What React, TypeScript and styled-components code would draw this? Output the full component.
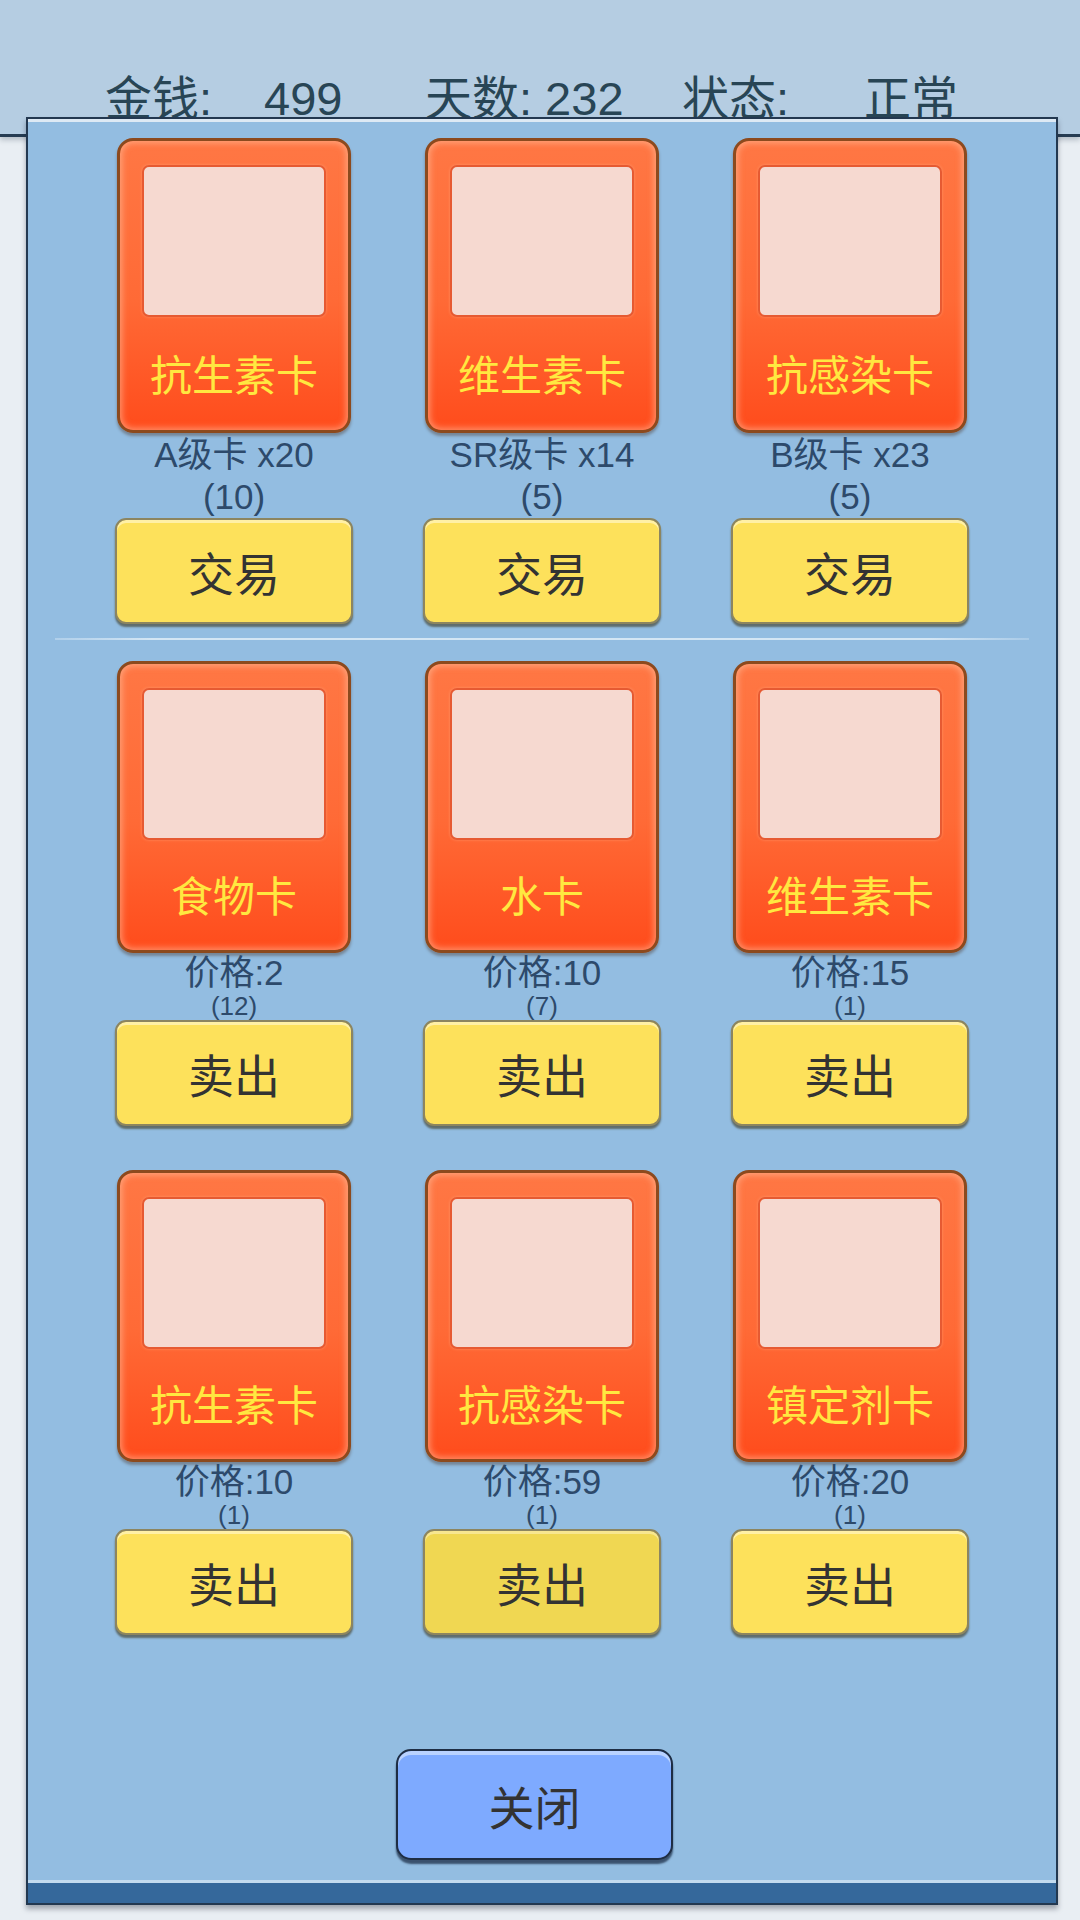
import React from "react";
import styled, { createGlobalStyle } from "styled-components";

interface ICard {
  name: string;
  info: string;
  count: string;
  pressed?: boolean;
}

const tradeCards: ICard[] = [
  { name: "抗生素卡", info: "A级卡 x20", count: "(10)" },
  { name: "维生素卡", info: "SR级卡 x14", count: "(5)" },
  { name: "抗感染卡", info: "B级卡 x23", count: "(5)" },
];

const sellRows: ICard[][] = [
  [
    { name: "食物卡", info: "价格:2", count: "(12)" },
    { name: "水卡", info: "价格:10", count: "(7)" },
    { name: "维生素卡", info: "价格:15", count: "(1)" },
  ],
  [
    { name: "抗生素卡", info: "价格:10", count: "(1)" },
    { name: "抗感染卡", info: "价格:59", count: "(1)", pressed: true },
    { name: "镇定剂卡", info: "价格:20", count: "(1)" },
  ],
];

const Card = ({ name, tall }: { name: string; tall?: boolean }) => (
  <CardFace tall={tall}>
    <CardArt />
    <CardName>{name}</CardName>
  </CardFace>
);

export default function App() {
  return (
    <>
      <GlobalStyle />
      <Page>
        <TopBar>
          <Stats>
            <span>金钱:</span>
            <span>499</span>
            <span>天数: 232</span>
            <span>状态:</span>
            <span>正常</span>
          </Stats>
        </TopBar>

        <Panel>
          <Content>
            <Row>
              {tradeCards.map(item => (
                <Slot key={item.name}>
                  <Card name={item.name} tall />
                  <Info>{item.info}</Info>
                  <Count big>{item.count}</Count>
                  <YellowButton>交易</YellowButton>
                </Slot>
              ))}
            </Row>
            <Divider />
            {sellRows.map((row, i) => (
              <Row key={i} gapTop={i > 0 ? 44 : 0}>
                {row.map(item => (
                  <Slot key={item.name}>
                    <Card name={item.name} />
                    <Info small>{item.info}</Info>
                    <Count>{item.count}</Count>
                    <YellowButton pressed={item.pressed}>卖出</YellowButton>
                  </Slot>
                ))}
              </Row>
            ))}
          </Content>
          <CloseButton>关闭</CloseButton>
          <BottomStrip />
        </Panel>
      </Page>
    </>
  );
}

const GlobalStyle = createGlobalStyle`
  html, body {
    margin: 0;
    padding: 0;
    background: #e9eef3;
  }
  body {
    font-family: "Liberation Sans", "Noto Sans CJK SC", sans-serif;
  }
`;

const Page = styled.div`
  width: 1080px;
  height: 1920px;
  overflow: hidden;
  background: #e9eef3;
`;

const TopBar = styled.div`
  height: 134px;
  background: #b5cde2;
  border-bottom: 3px solid #263c52;
  box-shadow: 0 3px 5px rgba(30, 50, 70, 0.25);
`;

const Stats = styled.div`
  display: grid;
  grid-template-columns: 159px 161px 257px 182px auto;
  padding: 74px 0 0 105px;
  font-size: 47px;
  line-height: 50px;
  color: #284555;
  white-space: nowrap;
`;

const Panel = styled.div`
  position: relative;
  margin: -20px 0 0 26px;
  width: 1032px;
  height: 1788px;
  box-sizing: border-box;
  border: 2px solid #233850;
  background: #93bde1;
  box-shadow: 0 4px 5px rgba(20, 30, 45, 0.35), inset 0 3px 0 #dde9f4;
  display: flex;
  flex-direction: column;
`;

const Content = styled.div`
  padding-top: 19px;
`;

const Row = styled.div<{ gapTop?: number }>`
  display: grid;
  grid-template-columns: repeat(3, 308px);
  justify-content: center;
  margin-top: ${props => props.gapTop || 0}px;
`;

const Slot = styled.div`
  display: flex;
  flex-direction: column;
  align-items: center;
`;

const CardFace = styled.div<{ tall?: boolean }>`
  width: 234px;
  height: ${props => (props.tall ? 295 : 292)}px;
  box-sizing: border-box;
  border: 3px solid #8c4a1e;
  border-radius: 16px;
  background: linear-gradient(180deg, #ff7744 0%, #ff6a36 55%, #ff4c1c 100%);
  box-shadow: 0 3px 3px rgba(60, 30, 10, 0.35), inset 0 0 6px 2px rgba(255, 200, 170, 0.55);
  display: flex;
  flex-direction: column;
  padding: 24px 22px 0 22px;
`;

const CardArt = styled.div`
  height: 152px;
  box-sizing: border-box;
  border: 2px solid #e65a32;
  border-radius: 7px;
  background: #f6d9d0;
  box-shadow: 0 0 3px rgba(255, 170, 130, 0.6);
`;

const CardName = styled.div`
  flex: 1;
  display: flex;
  align-items: center;
  justify-content: center;
  padding-bottom: 3px;
  font-size: 42px;
  color: #ffe840;
  white-space: nowrap;
`;

const Info = styled.div<{ small?: boolean }>`
  font-size: 35px;
  line-height: ${props => (props.small ? 40 : 44)}px;
  color: #2d4a6b;
  white-space: nowrap;
`;

const Count = styled.div<{ big?: boolean }>`
  font-size: ${props => (props.big ? 35 : 26)}px;
  line-height: ${props => (props.big ? 40 : 26)}px;
  color: #2d4a6b;
`;

const YellowButton = styled.div<{ pressed?: boolean }>`
  margin-top: 1px;
  width: 238px;
  height: 106px;
  box-sizing: border-box;
  border: 2px solid #8c8560;
  border-radius: 11px;
  background: ${props => (props.pressed ? "#f0d752" : "#fde15b")};
  box-shadow: 0 3px 2px rgba(60, 55, 30, 0.6), inset 0 3px 0 ${props => (props.pressed ? "#f7e690" : "#fff0a6")};
  display: flex;
  align-items: center;
  justify-content: center;
  font-size: 46px;
  color: #333333;
`;

const Divider = styled.div`
  margin: 14px 27px 21px;
  height: 2px;
  background: linear-gradient(90deg, rgba(220, 235, 248, 0.4) 0%, #d4e6f4 10%, #d4e6f4 90%, rgba(220, 235, 248, 0.3) 100%);
`;

const CloseButton = styled.div`
  margin-top: auto;
  margin-bottom: 20px;
  margin-right: 15px;
  align-self: center;
  width: 277px;
  height: 111px;
  box-sizing: border-box;
  border: 2px solid #1e2d44;
  border-radius: 15px;
  background: #7eaaff;
  box-shadow: 0 4px 2px rgba(20, 35, 60, 0.7), inset 0 4px 0 #b9d2ff;
  display: flex;
  align-items: center;
  justify-content: center;
  font-size: 46px;
  color: #333333;
`;

const BottomStrip = styled.div`
  height: 20px;
  border-top: 3px solid #c3dbef;
  background: #35689b;
`;
